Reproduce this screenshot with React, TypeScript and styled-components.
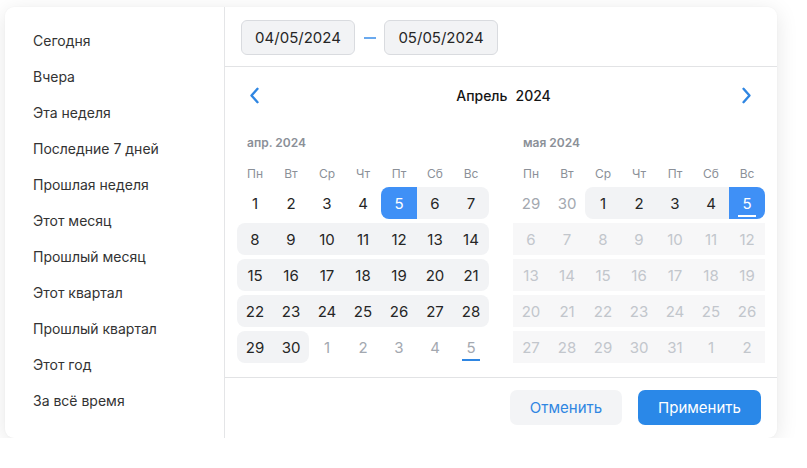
import styled, { createGlobalStyle } from "styled-components";

const GlobalStyle = createGlobalStyle`
  body {
    margin: 0;
    background: #ffffff;
    font-family: Inter, "Noto Sans", sans-serif;
    -webkit-font-smoothing: antialiased;
  }
`;

const Page = styled.div`
  padding: 7px 0 0 5px;
`;

const Card = styled.div`
  width: 772px;
  display: flex;
  background: #fff;
  border-radius: 9px;
  box-shadow: 0 4px 22px rgba(0, 0, 0, 0.1), 0 0 2px rgba(0, 0, 0, 0.04);
  overflow: hidden;
`;

const Sidebar = styled.ul`
  width: 220px;
  margin: 0;
  padding: 15px 0 0 28px;
  box-sizing: border-box;
  list-style: none;
  border-right: 1px solid #e4e5e7;
`;

const Preset = styled.li`
  height: 36px;
  display: flex;
  align-items: center;
  font-size: 14px;
  color: #333;
`;

const Main = styled.div`
  flex: 1;
  display: flex;
  flex-direction: column;
`;

const Header = styled.div`
  height: 60px;
  box-sizing: border-box;
  padding: 13px 16px 0;
  display: flex;
  align-items: flex-start;
  border-bottom: 1px solid #e2e3e5;
`;

const DateInput = styled.div`
  width: 114px;
  height: 35px;
  box-sizing: border-box;
  border: 1px solid #d9dbdf;
  border-radius: 6px;
  background: #f2f3f5;
  display: flex;
  align-items: center;
  justify-content: center;
  font-size: 15px;
  color: #262626;
`;

const Dash = styled.div`
  width: 29px;
  height: 35px;
  display: flex;
  align-items: center;
  justify-content: center;
  &::before {
    content: "";
    width: 12px;
    height: 2px;
    background: #6aa9ee;
  }
`;

const Body = styled.div`
  padding: 12px 12px 14px;
  border-bottom: 1px solid #e2e3e5;
`;

const Nav = styled.div`
  height: 32px;
  display: flex;
  align-items: center;
  justify-content: space-between;
  padding: 0 11px 0 10px;
`;

const NavButton = styled.button`
  border: none;
  background: none;
  padding: 0;
  width: 14px;
  height: 20px;
  display: flex;
  align-items: center;
  justify-content: center;
  cursor: pointer;
`;

const Title = styled.div`
  display: flex;
  gap: 8px;
  font-size: 14px;
  font-weight: 500;
  color: #151515;
  margin-left: 6px;
`;

const Months = styled.div`
  display: flex;
  gap: 24px;
  margin-top: 24px;
`;

const Month = styled.div`
  width: 252px;
`;

const MonthLabel = styled.div`
  height: 16px;
  line-height: 16px;
  padding-left: 10px;
  font-size: 12px;
  font-weight: 600;
  color: #8b9098;
`;

const Weekdays = styled.div`
  margin-top: 12px;
  height: 20px;
  display: grid;
  grid-template-columns: repeat(7, 36px);
  align-items: center;
  justify-items: center;
  font-size: 12px;
  color: #8b9098;
`;

const Weeks = styled.div`
  margin-top: 4px;
  display: flex;
  flex-direction: column;
  gap: 4px;
`;

const Week = styled.div`
  display: grid;
  grid-template-columns: repeat(7, 36px);
`;

type State = "plain" | "range" | "selected" | "outside" | "disabled";

const bgFor: Record<State, string> = {
  plain: "transparent",
  range: "#f2f3f5",
  selected: "#3f90f6",
  outside: "transparent",
  disabled: "#f7f7f8",
};

const colorFor: Record<State, string> = {
  plain: "#262626",
  range: "#262626",
  selected: "#fff",
  outside: "#a3a8b0",
  disabled: "#c2c6cc",
};

const Day = styled.div<{ $state: State; $l?: boolean; $r?: boolean }>`
  height: 32px;
  display: flex;
  align-items: center;
  justify-content: center;
  font-size: 15px;
  background: ${(p) => bgFor[p.$state]};
  color: ${(p) => colorFor[p.$state]};
  border-top-left-radius: ${(p) => (p.$l ? "8px" : "0")};
  border-bottom-left-radius: ${(p) => (p.$l ? "8px" : "0")};
  border-top-right-radius: ${(p) => (p.$r ? "8px" : "0")};
  border-bottom-right-radius: ${(p) => (p.$r ? "8px" : "0")};
`;

const Today = styled.span<{ $line: string }>`
  position: relative;
  &::after {
    content: "";
    position: absolute;
    left: 50%;
    bottom: -4px;
    width: 18px;
    margin-left: -9px;
    height: 2px;
    background: ${(p) => p.$line};
  }
`;

const Footer = styled.div`
  height: 60px;
  box-sizing: border-box;
  padding: 12px 16px 0;
  display: flex;
  justify-content: flex-end;
  gap: 16px;
`;

const Button = styled.button<{ $primary?: boolean }>`
  height: 35px;
  width: ${(p) => (p.$primary ? "123px" : "112px")};
  border: none;
  border-radius: 7px;
  font-family: inherit;
  font-size: 15px;
  cursor: pointer;
  background: ${(p) => (p.$primary ? "#2a88e8" : "#f3f4f6")};
  color: ${(p) => (p.$primary ? "#fff" : "#2f86e2")};
`;

type Cell = { d: number; s: State; l?: boolean; r?: boolean; today?: string };

const row = (days: number[], s: State, round = true): Cell[] =>
  days.map((d, i) => ({ d, s, l: round && i === 0, r: round && i === days.length - 1 }));

const range = (a: number, b: number) => Array.from({ length: b - a + 1 }, (_, i) => a + i);

const april: Cell[][] = [
  [
    ...range(1, 4).map((d) => ({ d, s: "plain" as State })),
    { d: 5, s: "selected", l: true },
    { d: 6, s: "range" },
    { d: 7, s: "range", r: true },
  ],
  row(range(8, 14), "range"),
  row(range(15, 21), "range"),
  row(range(22, 28), "range"),
  [
    { d: 29, s: "range", l: true },
    { d: 30, s: "range", r: true },
    ...range(1, 4).map((d) => ({ d, s: "outside" as State })),
    { d: 5, s: "outside", today: "#2f86e2" },
  ],
];

const may: Cell[][] = [
  [
    { d: 29, s: "outside" },
    { d: 30, s: "outside" },
    { d: 1, s: "range", l: true },
    { d: 2, s: "range" },
    { d: 3, s: "range" },
    { d: 4, s: "range" },
    { d: 5, s: "selected", r: true, today: "#fff" },
  ],
  row(range(6, 12), "disabled", false),
  row(range(13, 19), "disabled", false),
  row(range(20, 26), "disabled", false),
  row([27, 28, 29, 30, 31, 1, 2], "disabled", false),
];

const weekdays = ["Пн", "Вт", "Ср", "Чт", "Пт", "Сб", "Вс"];

const presets = [
  "Сегодня",
  "Вчера",
  "Эта неделя",
  "Последние 7 дней",
  "Прошлая неделя",
  "Этот месяц",
  "Прошлый месяц",
  "Этот квартал",
  "Прошлый квартал",
  "Этот год",
  "За всё время",
];

function Chevron({ dir }: { dir: "left" | "right" }) {
  return (
    <svg width="11" height="17" viewBox="0 0 11 17" fill="none">
      <path
        d={dir === "left" ? "M8.5 1.8L2.5 8.5L8.5 15.2" : "M2.5 1.8L8.5 8.5L2.5 15.2"}
        stroke="#2f86e2"
        strokeWidth="2.4"
        strokeLinecap="round"
        strokeLinejoin="round"
      />
    </svg>
  );
}

function MonthGrid({ label, weeks }: { label: string; weeks: Cell[][] }) {
  return (
    <Month>
      <MonthLabel>{label}</MonthLabel>
      <Weekdays>
        {weekdays.map((w) => (
          <span key={w}>{w}</span>
        ))}
      </Weekdays>
      <Weeks>
        {weeks.map((w, i) => (
          <Week key={i}>
            {w.map((c, j) => (
              <Day key={j} $state={c.s} $l={c.l} $r={c.r}>
                {c.today ? <Today $line={c.today}>{c.d}</Today> : c.d}
              </Day>
            ))}
          </Week>
        ))}
      </Weeks>
    </Month>
  );
}

export default function App() {
  return (
    <Page>
      <GlobalStyle />
      <Card>
        <Sidebar>
          {presets.map((p) => (
            <Preset key={p}>{p}</Preset>
          ))}
        </Sidebar>
        <Main>
          <Header>
            <DateInput>04/05/2024</DateInput>
            <Dash />
            <DateInput>05/05/2024</DateInput>
          </Header>
          <Body>
            <Nav>
              <NavButton>
                <Chevron dir="left" />
              </NavButton>
              <Title>
                <span>Апрель</span>
                <span>2024</span>
              </Title>
              <NavButton>
                <Chevron dir="right" />
              </NavButton>
            </Nav>
            <Months>
              <MonthGrid label="апр. 2024" weeks={april} />
              <MonthGrid label="мая 2024" weeks={may} />
            </Months>
          </Body>
          <Footer>
            <Button>Отменить</Button>
            <Button $primary>Применить</Button>
          </Footer>
        </Main>
      </Card>
    </Page>
  );
}
